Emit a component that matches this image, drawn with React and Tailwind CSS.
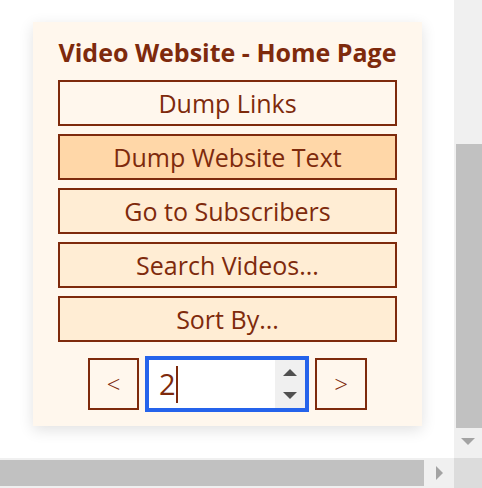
import React from 'react';

const actions = [
    { label: 'Dump Links', tone: 'bg-orange-50' },
    { label: 'Dump Website Text', tone: 'bg-orange-200' },
    { label: 'Go to Subscribers', tone: 'bg-orange-100' },
    { label: 'Search Videos...', tone: 'bg-orange-100' },
    { label: 'Sort By...', tone: 'bg-orange-100' },
];

export default function App() {
    return (
        <div className="flex flex-col w-[482px] h-[488px] bg-white overflow-hidden" style={{ fontFamily: '"Open Sans", "Noto Sans", sans-serif' }}>
            <div className="flex flex-1 min-h-0">
                {/* Page content */}
                <div className="flex-1 pl-[33px] pt-[22px]">
                    <div className="w-[389px] bg-orange-50 pt-4 px-[25px] pb-[14px] shadow-[0_4px_14px_rgba(0,0,0,0.12)]">
                        <h1 className="text-center text-[25px] leading-[28px] font-bold text-orange-900 mb-[14px] whitespace-nowrap">
                            Video Website - Home Page
                        </h1>

                        <div className="flex flex-col gap-2">
                            {actions.map((a) => (
                                <button
                                    key={a.label}
                                    className={`h-[46px] w-full flex items-center justify-center border-[2.5px] border-orange-900 text-orange-900 text-[25px] leading-none ${a.tone}`}
                                >
                                    {a.label}
                                </button>
                            ))}
                        </div>

                        <div className="flex items-center justify-center gap-[6px] mt-[14px]">
                            <button className="w-[51px] h-[52px] flex items-center justify-center border-[2.5px] border-orange-900 text-orange-900 text-[24px] font-light">
                                &lt;
                            </button>

                            <div className="w-[164px] h-[56px] flex border-4 border-[#2563eb] bg-white">
                                <div className="flex-1 flex items-center pl-[10px] text-orange-900 text-[29px]">
                                    <span>2</span>
                                    <span className="w-[2px] h-[37px] bg-orange-900"></span>
                                </div>
                                <div className="w-[30px] bg-[#f0f0f0] flex flex-col items-center justify-center gap-[16px]">
                                    <span className="w-0 h-0 border-x-[7px] border-x-transparent border-b-[7px] border-b-[#505050]"></span>
                                    <span className="w-0 h-0 border-x-[7px] border-x-transparent border-t-[7px] border-t-[#505050]"></span>
                                </div>
                            </div>

                            <button className="w-[52px] h-[52px] flex items-center justify-center border-[2.5px] border-orange-900 text-orange-900 text-[24px] font-light">
                                &gt;
                            </button>
                        </div>
                    </div>
                </div>

                {/* Vertical scrollbar */}
                <div className="w-[28px] bg-[#f0f0f0] flex flex-col items-end pt-[144px]">
                    <div className="w-[26px] h-[284px] bg-[#c1c1c1]"></div>
                    <div className="w-[28px] flex justify-center mt-[10px]">
                        <span className="w-0 h-0 border-x-[7px] border-x-transparent border-t-[7px] border-t-[#a3a3a3]"></span>
                    </div>
                </div>
            </div>

            {/* Horizontal scrollbar */}
            <div className="h-[30px] flex">
                <div className="flex-1 bg-[#f0f0f0] flex items-center">
                    <div className="w-[424px] h-[26px] bg-[#c1c1c1]"></div>
                    <span className="ml-[12px] w-0 h-0 border-y-[7px] border-y-transparent border-l-[7px] border-l-[#a3a3a3]"></span>
                </div>
                <div className="w-[28px] bg-[#dcdcdc]"></div>
            </div>
        </div>
    );
}
